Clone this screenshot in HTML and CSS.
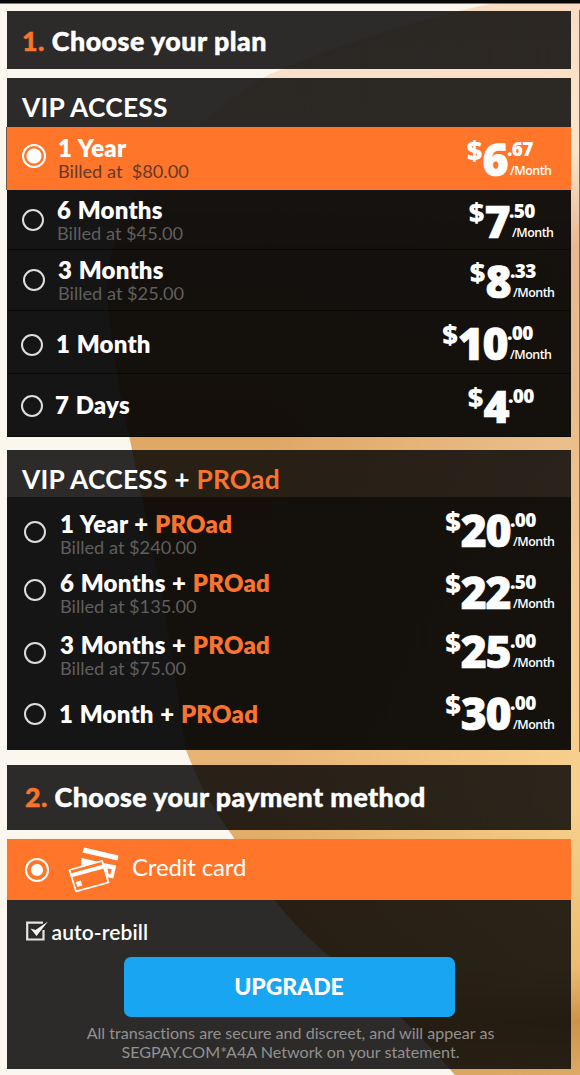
FILE: index.html
```
<!DOCTYPE html>
<html lang="en">
<head>
    <meta charset="UTF-8">
    <meta name="viewport" content="width=device-width, initial-scale=1.0">
    <title>Choose your plan</title>
    <link rel="stylesheet" href="styles.css">
</head>
<body>

    <!-- Backdrop -->
    <svg class="backdrop" viewBox="0 0 580 1075" preserveAspectRatio="none" aria-hidden="true">
        <defs>
            <linearGradient id="skin" x1="0" y1="0" x2="0" y2="1">
                <stop offset="0" stop-color="#f9dcc2"/>
                <stop offset="0.13" stop-color="#fae6d0"/>
                <stop offset="0.23" stop-color="#e6b78e"/>
                <stop offset="0.41" stop-color="#e0a765"/>
                <stop offset="0.7" stop-color="#e8b476"/>
                <stop offset="0.88" stop-color="#dca358"/>
                <stop offset="1" stop-color="#d8a05a"/>
            </linearGradient>
            <linearGradient id="edge" x1="0" y1="0" x2="0" y2="1">
                <stop offset="0" stop-color="#f9dcc2"/>
                <stop offset="0.14" stop-color="#fae4ca"/>
                <stop offset="0.23" stop-color="#e9b892"/>
                <stop offset="0.36" stop-color="#e8bb8c"/>
                <stop offset="0.55" stop-color="#f3cb90"/>
                <stop offset="0.75" stop-color="#f7d08c"/>
                <stop offset="0.9" stop-color="#ebbc70"/>
                <stop offset="0.95" stop-color="#cd9248"/>
                <stop offset="1" stop-color="#dcaa66"/>
            </linearGradient>
            <linearGradient id="fade" x1="0" y1="0" x2="1" y2="0">
                <stop offset="0.45" stop-color="#fff" stop-opacity="0"/>
                <stop offset="1" stop-color="#fff"/>
            </linearGradient>
            <mask id="right"><rect width="580" height="1075" fill="url(#fade)"/></mask>
            <path id="shape" d="M490 4 Q370 30 268 75 Q95 180 108 310 Q118 390 130 440 L163 600 L186 750 Q205 800 232 835 Q270 905 322 950 Q400 1010 455 1075 H580 V0 Z"/>
        </defs>
        <rect width="580" height="1075" fill="#fbf7ee"/>
        <use href="#shape" fill="url(#skin)"/>
        <use href="#shape" fill="url(#edge)" mask="url(#right)"/>
        <rect width="580" height="3.5" fill="#080808"/>
        <rect x="579" y="10" width="1" height="742" fill="#777069"/>
    </svg>

    <main class="page">
        <h2 class="step"><span class="accent">1.</span> Choose your plan</h2>

        <!-- VIP plans -->
        <section class="plans">
            <h3 class="plans-title">VIP ACCESS</h3>
            <label class="plan plan-a1 selected">
                <span class="radio"></span>
                <span class="info"><b>1 Year</b><small>Billed at &nbsp;$80.00</small></span>
                <span class="price"><i>$</i><strong>6</strong><span class="side"><sup>.67</sup><sub>/Month</sub></span></span>
            </label>
            <label class="plan plan-a2">
                <span class="radio"></span>
                <span class="info"><b>6 Months</b><small>Billed at $45.00</small></span>
                <span class="price"><i>$</i><strong>7</strong><span class="side"><sup>.50</sup><sub>/Month</sub></span></span>
            </label>
            <label class="plan plan-a3">
                <span class="radio"></span>
                <span class="info"><b>3 Months</b><small>Billed at $25.00</small></span>
                <span class="price"><i>$</i><strong>8</strong><span class="side"><sup>.33</sup><sub>/Month</sub></span></span>
            </label>
            <label class="plan plan-a4">
                <span class="radio"></span>
                <span class="info"><b>1 Month</b></span>
                <span class="price"><i>$</i><strong>10</strong><span class="side"><sup>.00</sup><sub>/Month</sub></span></span>
            </label>
            <label class="plan plan-a5">
                <span class="radio"></span>
                <span class="info"><b>7 Days</b></span>
                <span class="price"><i>$</i><strong>4</strong><span class="side"><sup>.00</sup></span></span>
            </label>
        </section>

        <!-- VIP + PROad plans -->
        <section class="plans plans-pro">
            <h3 class="plans-title">VIP ACCESS + <span class="accent">PROad</span></h3>
            <label class="plan plan-b1">
                <span class="radio"></span>
                <span class="info"><b>1 Year + <span class="accent">PROad</span></b><small>Billed at $240.00</small></span>
                <span class="price"><i>$</i><strong>20</strong><span class="side"><sup>.00</sup><sub>/Month</sub></span></span>
            </label>
            <label class="plan plan-b2">
                <span class="radio"></span>
                <span class="info"><b>6 Months + <span class="accent">PROad</span></b><small>Billed at $135.00</small></span>
                <span class="price"><i>$</i><strong>22</strong><span class="side"><sup>.50</sup><sub>/Month</sub></span></span>
            </label>
            <label class="plan plan-b3">
                <span class="radio"></span>
                <span class="info"><b>3 Months + <span class="accent">PROad</span></b><small>Billed at $75.00</small></span>
                <span class="price"><i>$</i><strong>25</strong><span class="side"><sup>.00</sup><sub>/Month</sub></span></span>
            </label>
            <label class="plan plan-b4">
                <span class="radio"></span>
                <span class="info"><b>1 Month + <span class="accent">PROad</span></b></span>
                <span class="price"><i>$</i><strong>30</strong><span class="side"><sup>.00</sup><sub>/Month</sub></span></span>
            </label>
        </section>

        <h2 class="step step-pay"><span class="accent">2.</span> Choose your payment method</h2>

        <!-- Payment -->
        <section class="payment">
            <div class="method">
                <span class="radio"></span>
                <svg class="cards" width="52" height="48" viewBox="0 0 52 48">
                    <path d="M16 1.5 L50.5 9.5 L49.5 14.5 L14.5 6.5 Z" fill="#fff"/>
                    <path d="M13.5 12 L35 17 L13 22 Z" fill="#fff"/>
                    <path d="M35 17 L48.3 19.5 L45.2 32.5 L38.5 31 Z" fill="#fff"/>
                    <path d="M39.5 22.5 L43.8 23.3 L42.6 28 L40.5 27.7 Z" fill="#ff762b"/>
                    <path d="M1.5 24 L34 14.8 L40.5 36.5 L8 45.3 Z" fill="#ff762b" stroke="#fff" stroke-width="1.8" stroke-linejoin="round"/>
                    <path d="M2.5 27.5 L35.5 18.5 L36.7 22.2 L3.7 31.2 Z M7.8 36 L12.8 34.6 L14.2 39.5 L9.2 41 Z" fill="#fff"/>
                </svg>
                <span class="method-name">Credit card</span>
            </div>
            <div class="rebill">
                <svg width="22" height="20" viewBox="0 0 22 20">
                    <path d="M17.5 9 V18.5 H1.2 V1.6 H17" fill="none" stroke="#e4e4e4" stroke-width="2.2"/>
                    <path d="M4.5 7.5 L9.5 9 L22 0.5 L10.5 15 Z" fill="#f4f4f4"/>
                </svg>
                <span>auto-rebill</span>
            </div>
            <button class="upgrade" type="button">UPGRADE</button>
            <p class="note">All transactions are secure and discreet, and will appear as<br>SEGPAY.COM*A4A Network on your statement.</p>
        </section>
    </main>

</body>
</html>
```
FILE: styles.css
```
* {
    box-sizing: border-box;
}

body {
    margin: 0;
    background-color: #fbf7ee;
    color: #fff;
    font-family: Lato, sans-serif;
}

.backdrop {
    position: absolute;
    top: 0;
    left: 0;
    width: 580px;
    height: 1075px;
}

.page {
    position: relative;
    width: 580px;
    height: 1075px;
    padding: 11px 9px 0 7px;
}

.accent {
    color: #f9742f;
}

h2, h3, p {
    margin: 0;
}

.step {
    height: 58px;
    margin-bottom: 9px;
    padding-left: 15px;
    background-color: rgba(7, 7, 7, 0.85);
    font-size: 26.8px;
    font-weight: 900;
    line-height: 60px;
    letter-spacing: 0.5px;
    white-space: nowrap;
    -webkit-text-stroke: 0.5px;
}

.step-pay {
    height: 65px;
    padding-left: 18px;
    line-height: 65px;
    letter-spacing: 0.42px;
}

/* Plans */
.plans {
    height: 359px;
    margin-bottom: 13px;
    background-color: rgba(7, 7, 7, 0.85);
}

.plans-title {
    height: 49px;
    padding-left: 15px;
    font-size: 26.4px;
    font-weight: 700;
    line-height: 58px;
    letter-spacing: 0.2px;
}

.plans-pro {
    height: 300px;
    margin-bottom: 15px;
}

.plans-pro .plans-title {
    height: 47px;
    line-height: 58px;
}

.plan {
    display: flex;
    align-items: flex-start;
    height: var(--row);
    padding-left: var(--left);
    padding-right: var(--right);
    background-color: rgba(0, 0, 0, 0.5);
    border-bottom: 1px solid rgba(0, 0, 0, 0.5);
}

.plans-pro .plan,
.plan.selected {
    border-bottom: none;
}

.plan.selected {
    margin-left: -1px;
    background-color: #ff762b;
    border-left: 1px solid #6b5a4e;
}

.radio {
    flex: none;
    width: 22px;
    height: 22px;
    margin-top: var(--radio);
    border: 2px solid #ddd;
    border-radius: 50%;
}

.selected .radio,
.method .radio {
    width: 24px;
    height: 24px;
    border-color: #fff;
    background: radial-gradient(circle, #fff 7px, transparent 8px);
}

.info {
    display: flex;
    flex-direction: column;
    margin-top: var(--text);
    margin-left: var(--gap);
    white-space: nowrap;
}

.info b {
    font-size: 24px;
    font-weight: 800;
    line-height: 26px;
    letter-spacing: 0.2px;
    word-spacing: 0.8px;
}

.info small {
    color: #5f5f5d;
    font-size: 18.2px;
    line-height: 20px;
}

.selected small {
    color: #63392a;
}

.price {
    display: flex;
    align-items: flex-start;
    margin-top: var(--price);
    margin-left: auto;
    font-family: "Open Sans", sans-serif;
    font-weight: 800;
}

.price i {
    font-size: 27px;
    font-style: normal;
    line-height: 27px;
}

.price strong {
    font-size: 44.5px;
    font-weight: 800;
    line-height: 46px;
    letter-spacing: -1.5px;
    -webkit-text-stroke: 0.7px #fff;
}

.side {
    display: flex;
    flex-direction: column;
    width: 44px;
    padding-top: 2px;
    letter-spacing: -0.7px;
}

.side sup {
    font-size: 19px;
    line-height: 22px;
    vertical-align: baseline;
}

.side sub {
    padding-left: 3px;
    font-size: 12.4px;
    font-weight: 600;
    line-height: 21px;
    letter-spacing: -0.5px;
    vertical-align: baseline;
}

.plan-a1 { --row: 63px; --left: 15px; --right: 20px; --radio: 17px; --text: 8px; --gap: 12px; --price: 9px; }
.plan-a2 { --row: 59.5px; --left: 15px; --right: 18px; --radio: 19px; --text: 7px; --gap: 13px; --price: 8px; }
.plan-a3 { --row: 61.5px; --left: 16px; --right: 17px; --radio: 19.5px; --text: 7px; --gap: 13px; --price: 8.5px; }
.plan-a4 { --row: 63px; --left: 14px; --right: 20px; --radio: 22.5px; --text: 20px; --gap: 13px; --price: 9px; }
.plan-a5 { --row: 63px; --left: 14px; --right: 19px; --radio: 20.5px; --text: 18px; --gap: 12px; --price: 9px; }
.plan-b1 { --row: 61px; --left: 17px; --right: 17px; --radio: 24px; --text: 14px; --gap: 14px; --price: 10px; }
.plan-b2 { --row: 62px; --left: 17px; --right: 17px; --radio: 21px; --text: 12px; --gap: 14px; --price: 11px; }
.plan-b3 { --row: 61px; --left: 17px; --right: 17px; --radio: 22px; --text: 11.5px; --gap: 14px; --price: 8px; }
.plan-b4 { --row: 69px; --left: 17px; --right: 17px; --radio: 22px; --text: 20px; --gap: 13px; --price: 9px; }

/* Payment */
.payment {
    display: flex;
    flex-direction: column;
    height: 230px;
    background-color: rgba(7, 7, 7, 0.85);
}

.method {
    display: flex;
    align-items: center;
    height: 61px;
    padding-left: 18px;
    background-color: #ff762b;
}

.method .radio {
    background: radial-gradient(circle, #fff 5.5px, transparent 6.5px);
}

.cards {
    margin-left: 19px;
}

.method-name {
    margin-left: 12px;
    padding-bottom: 6px;
    font-size: 24px;
    font-weight: 400;
    letter-spacing: -0.15px;
}

.rebill {
    display: flex;
    align-items: center;
    height: 57px;
    padding: 5px 0 0 18.5px;
    font-size: 21px;
    font-weight: 600;
    letter-spacing: 0.1px;
}

.rebill span {
    margin-left: 4px;
}

.upgrade {
    width: 331px;
    height: 60px;
    margin-left: 116.5px;
    padding-bottom: 3px;
    border: none;
    border-radius: 7px;
    background-color: #18a5f2;
    color: #fff;
    font-family: Lato, sans-serif;
    font-size: 23px;
    font-weight: 900;
    letter-spacing: -0.1px;
}

.note {
    margin-top: 7px;
    padding-left: 3px;
    color: #929190;
    font-size: 16.1px;
    font-variant-ligatures: none;
    line-height: 18.5px;
    text-align: center;
}
```
